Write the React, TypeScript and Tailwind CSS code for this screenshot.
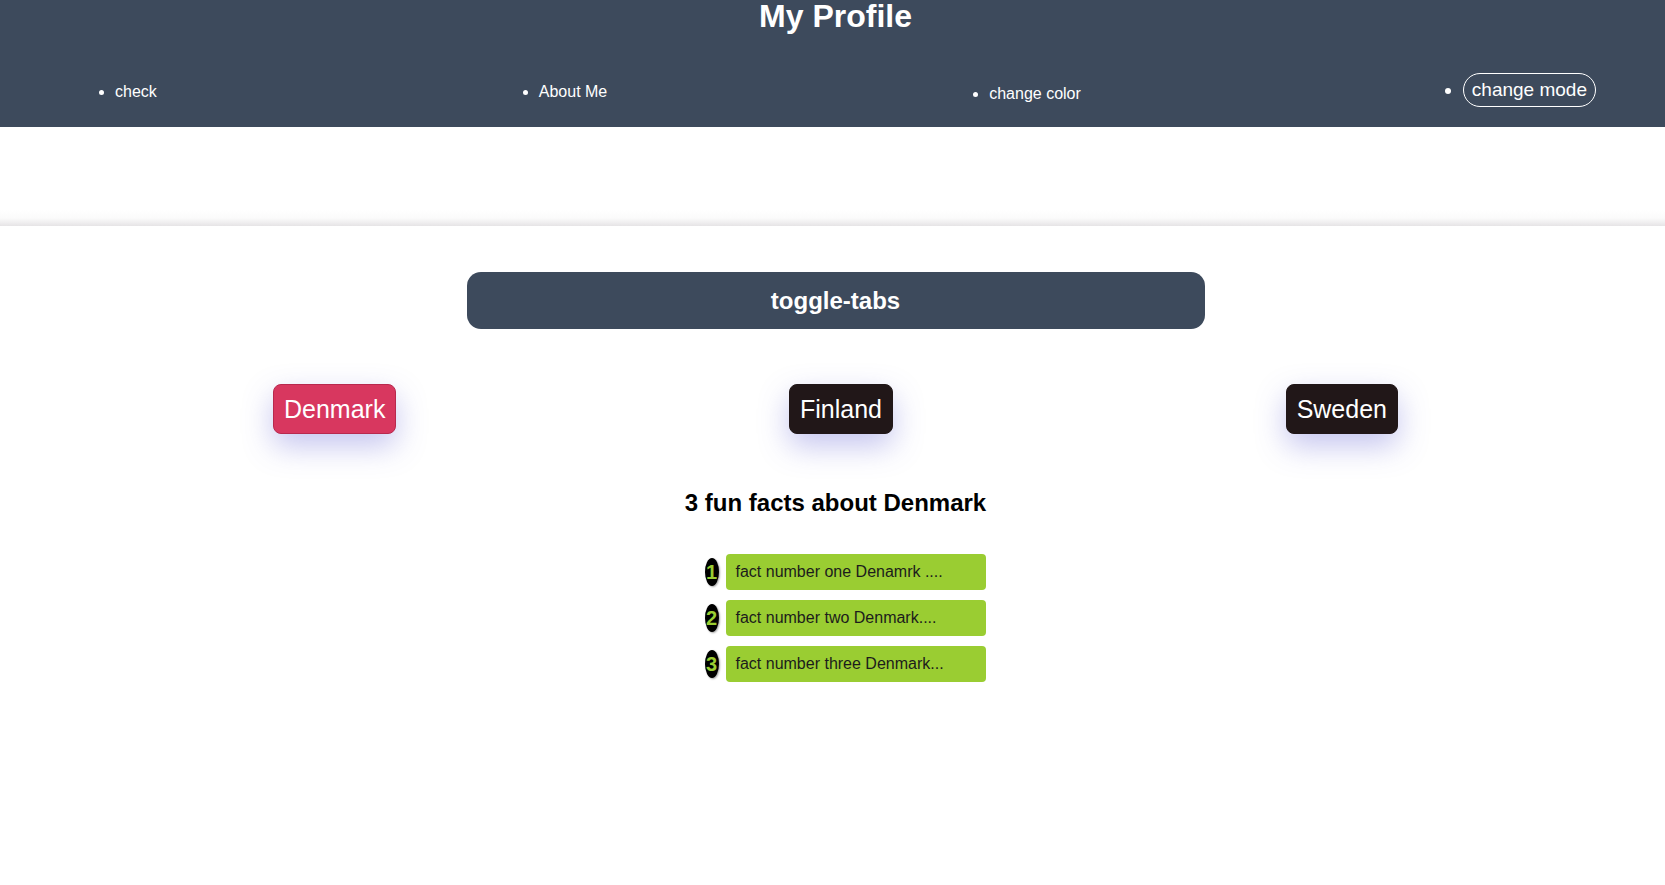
const navItems = ['check', 'About Me', 'change color'];

const countries = [
  { name: 'Denmark', active: true },
  { name: 'Finland', active: false },
  { name: 'Sweden', active: false },
];

const facts = [
  'fact number one Denamrk ....',
  'fact number two Denmark....',
  'fact number three Denmark...',
];

export default function App() {
  return (
    <div className="min-h-screen bg-white font-['Liberation_Sans',Arial,sans-serif]">
      <header className="h-[127px] bg-[#3d4a5c] text-white flex flex-col">
        <h1 className="pl-[6px] text-center text-[32px] leading-[32px] font-bold">My Profile</h1>
        <ul className="mt-[40px] h-[36px] flex items-center justify-between list-disc pl-[115px] pr-[69px]">
          <li className="text-[16px] mt-1">{navItems[0]}</li>
          <li className="text-[16px] mt-1">{navItems[1]}</li>
          <li className="text-[16px] mt-2">{navItems[2]}</li>
          <li className="text-[19px]">
            <button className="border border-white rounded-[17px] px-[8px] h-[34px] leading-[32px] text-white">
              change mode
            </button>
          </li>
        </ul>
      </header>

      <div className="h-[99px] bg-[linear-gradient(to_bottom,#ffffff_84%,#fbfbfb_92%,#e6e4e6)]" />

      <main className="flex flex-col items-center">
        <div className="mt-[46px] ml-[6px] w-[738px] h-[57px] rounded-[14px] bg-[#3d4a5c] flex items-center justify-center">
          <span className="text-white text-[24px] font-bold">toggle-tabs</span>
        </div>

        <div className="w-full mt-[55px] flex justify-between pl-[273px] pr-[267px]">
          {countries.map((c) => (
            <button
              key={c.name}
              className={`h-[50px] px-[10px] rounded-[8px] border text-white text-[25px] leading-[29px] shadow-[0_12px_30px_rgba(90,90,210,0.35)] ${
                c.active ? 'bg-[#d8375f] border-[#b8294e]' : 'bg-[#211718] border-[#211718]'
              }`}
            >
              {c.name}
            </button>
          ))}
        </div>

        <h2 className="mt-[55px] ml-[6px] text-[24px] leading-[28px] font-bold text-black">3 fun facts about Denmark</h2>

        <ol className="mt-[37px] ml-[6px] w-[300px] pl-[40px] flex flex-col gap-[10px]">
          {facts.map((f, i) => (
            <li key={f} className="relative flex items-center">
              <span className="absolute left-[-21px] w-[14px] h-[28px] rounded-[50%] bg-black text-[#9acd32] text-[20px] font-bold leading-[28px] text-center shadow-[1px_1px_2px_rgba(0,0,0,0.35)]">
                {i + 1}
              </span>
              <div className="w-[260px] h-[36px] rounded-[4px] bg-[#9acd32] pl-[10px] flex items-center text-[16px] text-[#1c1c1c]">
                {f}
              </div>
            </li>
          ))}
        </ol>
      </main>
    </div>
  );
}
